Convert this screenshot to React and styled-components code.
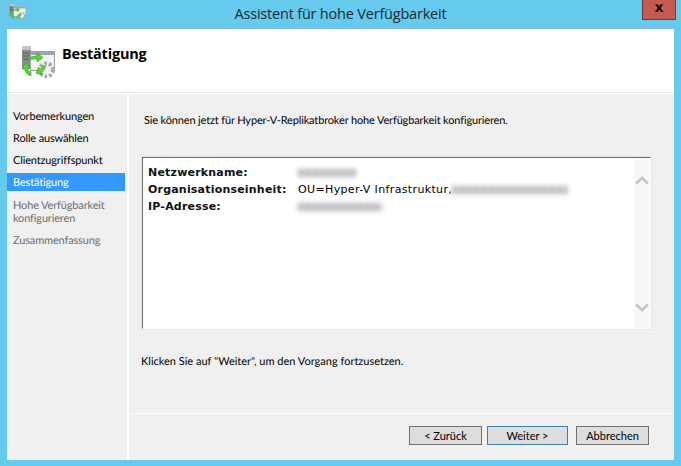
import * as React from 'react';
import styled, { createGlobalStyle } from 'styled-components';

const GlobalStyle = createGlobalStyle`
  html, body {
    margin: 0;
    padding: 0;
    background: #65caec;
  }
`;

const Frame = styled.div`
  width: 681px;
  height: 466px;
  box-sizing: border-box;
  display: flex;
  flex-direction: column;
  padding: 0 7px 6px;
  background: #65caec;
  font-family: Lato, "Open Sans", sans-serif;
  font-size: 11px;
  text-rendering: geometricPrecision;
  color: #000;
  overflow: hidden;
`;

const TitleBar = styled.div`
  height: 28px;
  margin: 0 -7px;
  padding: 0 5px 0 9px;
  display: flex;
  align-items: flex-start;
  justify-content: space-between;
  flex: none;
`;

const TitleIcon = styled.div`
  margin-top: 4px;
  width: 17px;
  height: 16px;
`;

const Title = styled.div`
  flex: 1;
  text-align: center;
  padding: 4px 0 0 13px;
  font-family: "Open Sans", sans-serif;
  font-size: 14.5px;
  text-rendering: auto;
  line-height: 20px;
  letter-spacing: -0.2px;
  color: #1a2a33;
`;

const CloseButton = styled.div`
  width: 34px;
  height: 20px;
  box-sizing: border-box;
  background: #c75a50;
  border: 1px solid #7d3530;
  border-top: none;
  font-family: "DejaVu Sans", sans-serif;
  font-weight: 700;
  font-size: 14px;
  line-height: 16px;
  text-align: center;
  color: #111;
`;

const Win = styled.div`
  flex: 1;
  display: flex;
  flex-direction: column;
  background: #fff;
  border-top: 1px solid #86b8d0;
  min-height: 0;
`;

const Header = styled.div`
  height: 64px;
  flex: none;
  box-sizing: border-box;
  display: flex;
  align-items: flex-start;
  gap: 7px;
  padding: 15px 0 0 14px;
  border-bottom: 1px solid #e6e6e6;
`;

const HeaderIcon = styled.div`
  width: 34px;
  height: 32px;
  margin-top: 2px;
`;

const HeaderTitle = styled.h1`
  margin: 0;
  font-family: "Open Sans", sans-serif;
  font-size: 14.5px;
  text-rendering: auto;
  font-weight: 700;
  line-height: 20px;
  letter-spacing: -0.2px;
`;

const Body = styled.div`
  flex: 1;
  display: flex;
  gap: 2px;
  padding-top: 1px;
  min-height: 0;
`;

const Nav = styled.nav`
  width: 120px;
  flex: none;
  box-sizing: border-box;
  background: #f0f0f0;
  padding-top: 13px;
  display: flex;
  flex-direction: column;
  gap: 4px;
`;

const NavItem = styled.div`
  width: 118px;
  box-sizing: border-box;
  padding: ${(p) => (p.$multi ? '4px 6px 2px' : '2px 6px 0')};
  line-height: ${(p) => (p.$multi ? '13px' : '16px')};
  letter-spacing: -0.15px;
  background: ${(p) => (p.$active ? '#3399ff' : 'transparent')};
  color: ${(p) => (p.$active ? '#fff' : p.$disabled ? '#6d6d6d' : '#000')};
`;

const Content = styled.main`
  flex: 1;
  display: flex;
  flex-direction: column;
  background: #f0f0f0;
  min-width: 0;
`;

const Pane = styled.div`
  flex: 1;
  display: flex;
  flex-direction: column;
  padding: 19px 22px 0 12px;
  border-bottom: 1px solid #fff;
`;

const Intro = styled.p`
  margin: 0 0 27px 3px;
  line-height: 16px;
  letter-spacing: -0.15px;
`;

const DetailBox = styled.div`
  height: 174px;
  box-sizing: border-box;
  display: flex;
  background: #fff;
  border-style: solid;
  border-width: 2px;
  border-color: #6f6f6f #fff #fff #6f6f6f;
  outline: 1px solid #e4e4e4;
  outline-offset: -1px;
`;

const DetailGrid = styled.div`
  flex: 1;
  display: grid;
  grid-template-columns: 150px 1fr;
  grid-auto-rows: 17px;
  align-content: start;
  align-items: center;
  padding: 6px 0 0 5px;
  font-family: "DejaVu Sans", sans-serif;
  font-size: 11px;
  text-rendering: auto;
  letter-spacing: 0.36px;
  color: #000;
`;

const Label = styled.div`
  font-weight: 700;
  letter-spacing: 0.2px;
  color: #111;
`;

const Value = styled.div`
  display: flex;
  align-items: center;
  white-space: nowrap;
`;

// ausgeblendete Werte im Original, nur als Unschärfe sichtbar
const Blurred = styled.span`
  display: inline-block;
  width: ${(p) => p.$w}px;
  height: 8px;
  background: repeating-linear-gradient(90deg, #b0b0b6 0 4px, #d2d2d7 4px 7px, #b8b8be 7px 13px, #dedee2 13px 15px);
  filter: blur(2.4px);
`;

const ScrollTrack = styled.div`
  width: 16px;
  flex: none;
  background: #f8f8f8;
  display: flex;
  flex-direction: column;
  justify-content: space-between;
  align-items: center;
  padding: 18px 0 16px;
`;

const Hint = styled.p`
  margin: 24px 0 0;
  line-height: 16px;
`;

const Footer = styled.div`
  flex: none;
  height: 46px;
  box-sizing: border-box;
  display: flex;
  justify-content: flex-end;
  padding: 12px 25px 0 0;
`;

const Button = styled.button`
  width: ${(p) => p.$w}px;
  height: 19px;
  margin-left: ${(p) => p.$gap}px;
  padding: 0;
  box-sizing: border-box;
  background: #dddddd;
  border: 1px solid ${(p) => (p.$default ? '#3c7fb1' : '#707070')};
  font: inherit;
  line-height: 16px;
  color: #000;
`;

const WizardIcon = () => (
  <svg width="100%" height="100%" viewBox="0 0 34 32">
    <rect x="1" y="0" width="9" height="23" fill="#8c8c8c" />
    <rect x="1" y="0" width="9" height="4" fill="#c4c4c4" />
    <path d="M2 7h7M2 10h7M2 13h7" stroke="#5c5c5c" />
    <rect x="9.500" y="5.500" width="24" height="19" fill="#f4f4f4" stroke="#a0a0a0" />
    <rect x="10" y="6" width="23" height="3" fill="#9aa5b0" />
    <circle cx="25.500" cy="24" r="4" fill="#f0f2f4" />
    <circle cx="25.500" cy="24" r="6.500" fill="none" stroke="#a4abb3" strokeWidth="4" strokeDasharray="2.800 1.800" />
    <path d="M6 15c1-3 5-5 10-5V7l6 4.500-6 4.500v-3c-4 0-7 0-10 2z" fill="#5ccf3a" stroke="#3aa024" strokeWidth=".6" />
    <path d="M1 23l4-6.500 4 6-2.500.2c.8 2 2 3 3.500 3.500v3.500c-3-.2-5.500-3-6.500-6.500z" fill="#5ccf3a" stroke="#3aa024" strokeWidth=".6" />
    <path d="M15 27.500l2.500-6.500 1.200 2c1.500-.8 2.500-1.800 3-3.500l3 .8c-.7 3-2.200 5-4.300 6l1.200 2z" fill="#5ccf3a" stroke="#3aa024" strokeWidth=".6" />
  </svg>
);

const Chevron = ({ down }) => (
  <svg width="14" height="9" viewBox="0 0 14 9">
    <path d={down ? 'M1 1.500l6 5.500 6-5.500' : 'M1 7.500l6-5.500 6 5.500'} fill="none" stroke="#c2c2c2" strokeWidth="2.400" />
  </svg>
);

const steps = [
  { text: 'Vorbemerkungen' },
  { text: 'Rolle auswählen' },
  { text: 'Clientzugriffspunkt' },
  { text: 'Bestätigung', active: true },
  { text: <>Hohe Verfügbarkeit<br />konfigurieren</>, disabled: true, multi: true },
  { text: 'Zusammenfassung', disabled: true },
];

const App = () => {
  return (
    <Frame>
      <GlobalStyle />
      <TitleBar>
        <TitleIcon><WizardIcon /></TitleIcon>
        <Title>Assistent für hohe Verfügbarkeit</Title>
        <CloseButton>x</CloseButton>
      </TitleBar>
      <Win>
        <Header>
          <HeaderIcon><WizardIcon /></HeaderIcon>
          <HeaderTitle>Bestätigung</HeaderTitle>
        </Header>
        <Body>
          <Nav>
            {steps.map((s, i) => (
              <NavItem key={i} $active={s.active} $disabled={s.disabled} $multi={s.multi}>{s.text}</NavItem>
            ))}
          </Nav>
          <Content>
            <Pane>
              <Intro>Sie können jetzt für Hyper-V-Replikatbroker hohe Verfügbarkeit konfigurieren.</Intro>
              <DetailBox>
                <DetailGrid>
                  <Label>Netzwerkname:</Label>
                  <Value><Blurred $w={58} /></Value>
                  <Label>Organisationseinheit:</Label>
                  <Value>OU=Hyper-V Infrastruktur,<Blurred $w={116} /></Value>
                  <Label>IP-Adresse:</Label>
                  <Value><Blurred $w={84} /></Value>
                </DetailGrid>
                <ScrollTrack>
                  <Chevron />
                  <Chevron down />
                </ScrollTrack>
              </DetailBox>
              <Hint>Klicken Sie auf "Weiter", um den Vorgang fortzusetzen.</Hint>
            </Pane>
            <Footer>
              <Button $w={73} $gap={0}>&lt; Zurück</Button>
              <Button $w={81} $gap={5} $default>Weiter &gt;</Button>
              <Button $w={73} $gap={8}>Abbrechen</Button>
            </Footer>
          </Content>
        </Body>
      </Win>
    </Frame>
  );
};

export default App;
